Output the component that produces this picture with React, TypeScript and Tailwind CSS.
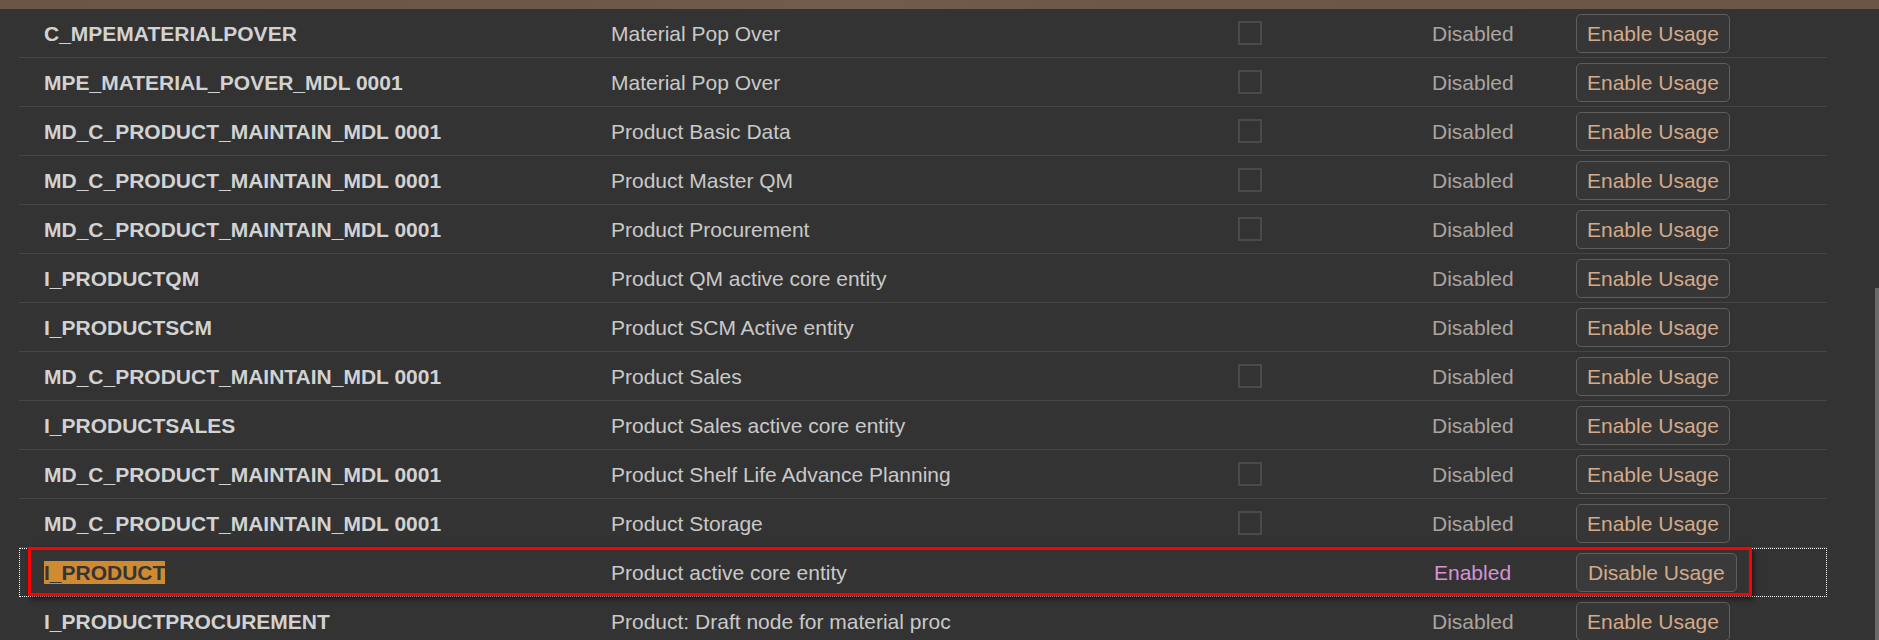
import React from 'react'

type Row = {
  name: string
  description: string
  checkbox: boolean
  enabled?: boolean
}

const rows: Row[] = [
  { name: 'C_MPEMATERIALPOVER', description: 'Material Pop Over', checkbox: true },
  { name: 'MPE_MATERIAL_POVER_MDL 0001', description: 'Material Pop Over', checkbox: true },
  { name: 'MD_C_PRODUCT_MAINTAIN_MDL 0001', description: 'Product Basic Data', checkbox: true },
  { name: 'MD_C_PRODUCT_MAINTAIN_MDL 0001', description: 'Product Master QM', checkbox: true },
  { name: 'MD_C_PRODUCT_MAINTAIN_MDL 0001', description: 'Product Procurement', checkbox: true },
  { name: 'I_PRODUCTQM', description: 'Product QM active core entity', checkbox: false },
  { name: 'I_PRODUCTSCM', description: 'Product SCM Active entity', checkbox: false },
  { name: 'MD_C_PRODUCT_MAINTAIN_MDL 0001', description: 'Product Sales', checkbox: true },
  { name: 'I_PRODUCTSALES', description: 'Product Sales active core entity', checkbox: false },
  { name: 'MD_C_PRODUCT_MAINTAIN_MDL 0001', description: 'Product Shelf Life Advance Planning', checkbox: true },
  { name: 'MD_C_PRODUCT_MAINTAIN_MDL 0001', description: 'Product Storage', checkbox: true },
  { name: 'I_PRODUCT', description: 'Product active core entity', checkbox: false, enabled: true },
  { name: 'I_PRODUCTPROCUREMENT', description: 'Product: Draft node for material proc', checkbox: false },
]

function UsageRow({ row }: { row: Row }) {
  const selected = !!row.enabled
  return (
    <div
      className={
        'relative grid grid-cols-[567px_627px_194px_144px_auto] items-center h-[49px] pl-[25px] ' +
        (selected
          ? 'outline-1 outline-dotted outline-white -outline-offset-1'
          : 'border-b border-[#464646]')
      }
    >
      <div className="font-bold text-[#d2d2d2]">
        {selected ? (
          <span className="bg-[#cf8a32] text-[#353535]">{row.name}</span>
        ) : (
          row.name
        )}
      </div>
      <div className="text-[#c9c9c9]">{row.description}</div>
      <div>
        {row.checkbox && <div className="w-[24px] h-[24px] border-2 border-[#4a4a4a]" />}
      </div>
      <div className={selected ? 'pl-[2px] text-[#d592d5]' : 'text-[#aba39f]'}>
        {selected ? 'Enabled' : 'Disabled'}
      </div>
      <div>
        <button
          className={
            'h-[39px] rounded-[5px] border border-[#5e5e5e] text-[#d3aa8a] ' +
            (selected ? 'px-[11px] bg-[#3a3a3a]' : 'px-[10px] bg-[#363636]')
          }
        >
          {selected ? 'Disable Usage' : 'Enable Usage'}
        </button>
      </div>
      {selected && (
        <div className="absolute left-[9px] top-[-1px] w-[1724px] h-[49px] border-[3px] border-[#ff0000] shadow-[2px_3px_5px_rgba(0,0,0,0.55)] pointer-events-none" />
      )}
    </div>
  )
}

export default function App() {
  return (
    <div
      className="h-[640px] w-[1879px] overflow-hidden bg-[#333333] text-[21px] leading-[23px]"
      style={{ fontFamily: '"Liberation Sans", Arial, sans-serif' }}
    >
      <div className="h-[9px] bg-[linear-gradient(90deg,#6a5646_0%,#6b5848_30%,#705d4c_45%,#6b5848_60%,#6a5646_100%)]" />
      <div className="flex">
        <div className="flex-1 pl-[19px] pr-[48px]">
          {rows.map((row, i) => (
            <UsageRow key={i} row={row} />
          ))}
        </div>
        <div className="w-[4px] pt-[279px]">
          <div className="h-[400px] bg-[#6a6a6a]" />
        </div>
      </div>
    </div>
  )
}
